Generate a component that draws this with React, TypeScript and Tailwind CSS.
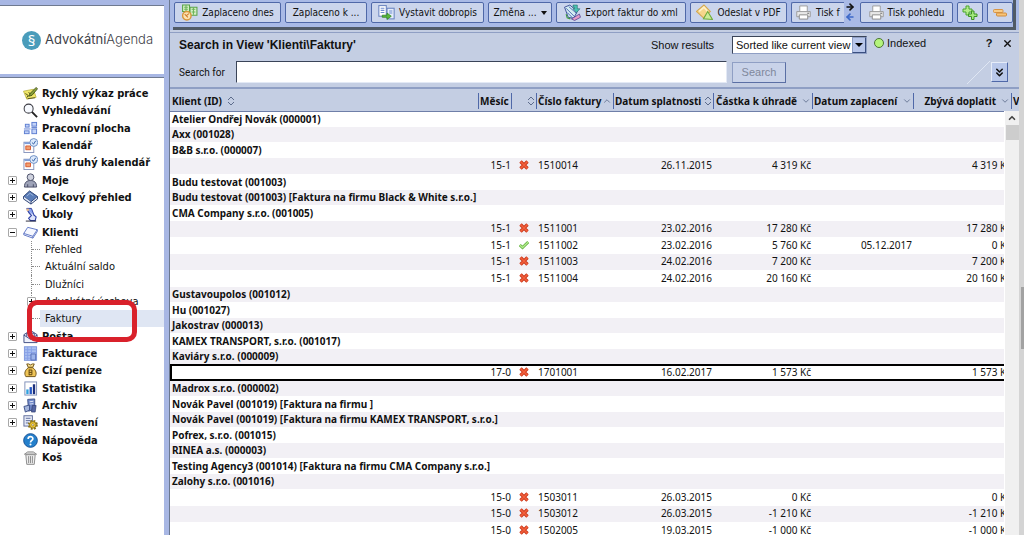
import React, { useState } from 'react';
import { ChevronDown, ChevronUp, ChevronsDown, ArrowLeft, ArrowRight, X } from 'lucide-react';
import clsx from 'clsx';

type IconProps = { className?: string };

const Svg: React.FC<{ className?: string; children: React.ReactNode }> = ({ className, children }) => (
    <svg viewBox="0 0 16 16" className={clsx('shrink-0', className)} fill="none" aria-hidden="true">
        {children}
    </svg>
);

const NoteIcon = (p: IconProps) => (
    <Svg {...p}>
        <path d="M0.500 5.500L11 3.500L14 12L4 14Z" fill="#f1e86a" stroke="#b8af3c" strokeWidth="0.800" />
        <path d="M2.500 8L5.500 10L4 12.500M6 6.500L7.500 8.500" stroke="#54521c" />
        <path d="M6 11L8 7.500L14 1.500L15.500 3L9.500 10Z" fill="#8aa03a" stroke="#30400c" strokeWidth="0.800" />
        <path d="M5 13.500L13 12.500" stroke="#54521c" />
    </Svg>
);

const SearchIcon = (p: IconProps) => (
    <Svg {...p}>
        <circle cx="6" cy="6" r="4.800" fill="#f7faff" stroke="#3c3c44" strokeWidth="1.100" />
        <path d="M9.500 9.500L15 15" stroke="#222" strokeWidth="2" />
    </Svg>
);

const DesktopIcon = (p: IconProps) => (
    <Svg {...p}>
        <g fill="#c3d3f8" stroke="#5b7cd0">
            <rect x="2.500" y="3.500" width="4" height="3" />
            <rect x="1.500" y="10.500" width="5" height="3" />
            <rect x="9.500" y="1.500" width="5" height="4" />
            <rect x="9.500" y="8.500" width="5" height="5" />
        </g>
        <path d="M1 8.500H8M9 7H15" stroke="#5b7cd0" />
    </Svg>
);

const CalendarIcon = (p: IconProps) => (
    <Svg {...p}>
        <rect x="1" y="4.500" width="10.500" height="11" fill="#fff" stroke="#8794bc" />
        <path d="M1.500 5.500H9" stroke="#7f9ed8" strokeWidth="2" />
        <path d="M3 8.500H8V12.500H3Z" fill="#f0a070" stroke="#d9552c" />
        <circle cx="11.500" cy="4.800" r="4.200" fill="#dce9fb" stroke="#6d8fc4" />
        <path d="M9.500 4.800L11.300 6.500L13.500 3" stroke="#2c5aa0" />
    </Svg>
);

const PersonIcon = (p: IconProps) => (
    <Svg {...p}>
        <path d="M1.500 15C1.500 10 4 8 8 8S14.500 10 14.500 15Z" fill="#9ea3b8" stroke="#4a4e66" />
        <circle cx="8" cy="4.500" r="3.600" fill="#cfd2de" stroke="#4a4e66" />
        <path d="M5 15V12M11 15V12" stroke="#4a4e66" />
    </Svg>
);

const BookIcon = (p: IconProps) => (
    <Svg {...p}>
        <path d="M0.500 7L7 1L15.500 7L8.500 12.500Z" fill="#5b7db8" stroke="#283d70" />
        <path d="M0.500 7V9.500L8.500 15V12.500M8.500 15L15.500 9.500V7" fill="#dfe6f4" stroke="#283d70" />
        <path d="M4 6.500L7.500 3.500L11 6" stroke="#9db5dc" />
    </Svg>
);

const TaskIcon = (p: IconProps) => (
    <Svg {...p}>
        <path d="M4 1.500H9L11.500 8L7 7.500Z" fill="#8aa2ee" stroke="#2c3fa0" />
        <path d="M5 4L9 9L6 12L8 14.500H13L14 10.500L11 8" fill="#dfe5fb" stroke="#3144a8" strokeWidth="1.200" />
        <circle cx="5" cy="3" r="1.500" fill="#e5b98c" />
        <path d="M3 15H14" stroke="#223" />
    </Svg>
);

const ClientsIcon = (p: IconProps) => (
    <Svg {...p}>
        <path d="M0.800 9L5 2.500L15.200 5L10.500 12Z" fill="#f6f8ff" stroke="#5d74c4" />
        <path d="M0.800 9V10.500L10.500 14L15.200 7V5M10.500 12V14" stroke="#5d74c4" />
    </Svg>
);

const MailIcon = (p: IconProps) => (
    <Svg {...p}>
        <path d="M1 6L8 1.500L15 6V14.500H1Z" fill="#eef1fb" stroke="#3c4a80" />
        <path d="M1 6.500L8 11L15 6.500M4 8V4.500H12V8" stroke="#3c4a80" />
    </Svg>
);

const LedgerIcon = (p: IconProps) => (
    <Svg {...p}>
        <rect x="1.500" y="0.800" width="13" height="14.500" fill="#a9bff0" stroke="#7d96dc" />
        <path d="M1.500 4H14.500M1.500 7H14.500M1.500 10H9M1.500 13H9M5 1V15M9 1V15" stroke="#86a0e6" />
        <path d="M8.500 8.500H13.500V15H8.500Z" fill="#9db4ea" stroke="#5870b8" />
    </Svg>
);

const MoneyIcon = (p: IconProps) => (
    <Svg {...p}>
        <path d="M5.500 5C2 8 1 11 3 14.500H13C15 11 14 8 10.500 5Z" fill="#efc558" stroke="#6e5216" />
        <path d="M5.500 4.500H10.500L12 1H10L8 2L6 1H4Z" fill="#f6dc8c" stroke="#6e5216" />
        <path d="M6.500 7V13M6.500 7.500H9.500V10H6.500M9.500 10V12.500H6.500" stroke="#5a400c" />
    </Svg>
);

const ChartIcon = (p: IconProps) => (
    <Svg {...p}>
        <rect x="2" y="1" width="12.500" height="14" fill="#fff" stroke="#7c8db8" />
        <rect x="3.500" y="9" width="2.500" height="5" fill="#2fa1de" />
        <rect x="7" y="6.500" width="2.500" height="7.500" fill="#2456c4" />
        <rect x="10.500" y="3.500" width="2.500" height="10.500" fill="#1b2f7c" />
    </Svg>
);

const ArchiveIcon = (p: IconProps) => (
    <Svg {...p}>
        <path d="M5 1.500L12.500 1V12L6 14Z" fill="#7088c8" stroke="#3c4f88" />
        <path d="M7 4L11 3.500M7 6.500L11 6" stroke="#e3e9f8" />
        <path d="M1 9L7 7.500V13L2.500 15Z" fill="#a4b5dc" stroke="#3c4f88" />
        <path d="M10 8H14L13 15H9Z" fill="#5566a4" stroke="#2c3a6c" strokeWidth="0.700" />
    </Svg>
);

const SettingsIcon = (p: IconProps) => (
    <Svg {...p}>
        <rect x="1" y="0.800" width="9" height="11" fill="#e8ecf8" stroke="#5a6898" />
        <path d="M3 3.500H8M3 6H8M3 8.500H6" stroke="#5a6898" />
        <circle cx="10.500" cy="10.500" r="4.300" stroke="#8a7214" strokeWidth="2" strokeDasharray="2 1.400" />
        <circle cx="10.500" cy="10.500" r="3.500" fill="#f0c834" stroke="#8a7214" />
        <circle cx="10.500" cy="10.500" r="1.200" fill="#fff" stroke="#6e5a10" strokeWidth="0.600" />
    </Svg>
);

const HelpIcon = (p: IconProps) => (
    <Svg {...p}>
        <circle cx="8" cy="8" r="7.300" fill="#2480cc" stroke="#134f94" />
        <path d="M5.500 6.300C5.500 3 10.500 3.200 10.500 6C10.500 7.800 8 7.800 8 10" stroke="#fff" strokeWidth="1.800" />
        <circle cx="8" cy="12.300" r="1.100" fill="#fff" />
    </Svg>
);

const TrashIcon = (p: IconProps) => (
    <Svg {...p}>
        <path d="M3 5H13L12 15.300H4Z" fill="#eee" stroke="#8a8a8a" />
        <path d="M1.500 4.500L5 2H11L14.500 4.500Z" fill="#dcdcdc" stroke="#8a8a8a" />
        <path d="M6 6.500V14M8 6.500V14M10 6.500V14" stroke="#8a8a8a" />
    </Svg>
);

const PaidIcon = (p: IconProps) => (
    <Svg {...p}>
        <path d="M1.500 1H8V7H1.500ZM8.500 3H15V10.500H8.500Z" fill="#d9f0c8" stroke="#5aa348" />
        <path d="M3 3H6.500M3 5H6.500M10 5H13.500M10 7.500H13.500M4.700 1V7M11.700 3V10" stroke="#6cb45a" />
        <circle cx="5.500" cy="11" r="4" fill="#fbe3b4" stroke="#d8963c" strokeWidth="1.300" />
        <path d="M3.500 9.500L6.500 12.500M7.500 9L5 11" stroke="#d07c2c" />
    </Svg>
);

const CreditNoteIcon = (p: IconProps) => (
    <Svg {...p}>
        <rect x="0.800" y="1.500" width="7" height="10" fill="#fff" stroke="#6a84c0" />
        <rect x="8.500" y="4" width="6.700" height="10" fill="#e5ecfa" stroke="#6a84c0" />
        <path d="M2.500 4H6M2.500 6H6M2.500 8H6M10.500 6.500H13.500M10.500 8.500H13.500" stroke="#6f8cd0" />
        <path d="M4 10.500H8.500V8.500L12.500 11.500L8.500 14.500V12.500H4Z" fill="#58b83c" stroke="#2f8420" strokeWidth="0.700" />
    </Svg>
);

const ExportIcon = (p: IconProps) => (
    <Svg {...p}>
        <path d="M0.500 3L5.500 1L12.500 7L9 13.500L4 12.500Z" fill="#d4ecf2" stroke="#2c3c8c" strokeWidth="0.800" />
        <path d="M2 4L10 12M4.500 2.500L12 9M3 8L8 13" stroke="#3c5cac" strokeWidth="0.800" />
        <path d="M8.500 1H12.500V4.500H15L11.800 8L8.500 4.500H10V3H8.500Z" fill="#4cc4b4" stroke="#246c6c" strokeWidth="0.600" />
        <path d="M7 14L14.500 9.500L15.500 12.500L10 15.500Z" fill="#e49cc8" stroke="#4c3c8c" strokeWidth="0.700" />
        <path d="M2 9.500L3 13L6 14" stroke="#3c9c3c" />
    </Svg>
);

const SendIcon = (p: IconProps) => (
    <Svg {...p}>
        <path d="M0.500 7L7.500 1L13.500 7L7 13Z" fill="#f6d68c" stroke="#d4a850" />
        <path d="M3 7L7.500 3L11 7" stroke="#fff1c8" strokeWidth="1.500" />
        <path d="M11 7L15.500 14.500L7 14Z" fill="#cdeb9a" stroke="#6fac3c" />
    </Svg>
);

const PrinterIcon = (p: IconProps) => (
    <Svg {...p}>
        <path d="M4 7V1H12V7" fill="#fff" stroke="#9a9a9a" />
        <path d="M0.800 7H15.200V12.500H0.800Z" fill="#e8e8e8" stroke="#9a9a9a" />
        <path d="M3.500 10.500H12.500V15H3.500Z" fill="#fff" stroke="#8a8a8a" />
        <path d="M12 8.800H14" stroke="#666" />
    </Svg>
);

const PlusIcon = (p: IconProps) => (
    <Svg {...p}>
        <path d="M4 1H7V4H10V7H7V10H4V7H1V4H4Z" fill="#b4ec8c" stroke="#48a42c" />
        <path d="M9.500 6H12V9H15V11.500H12V14.500H9.500V11.500H6.500V9H9.500Z" fill="#a4e880" stroke="#3c9424" />
    </Svg>
);

const MinusIcon = (p: IconProps) => (
    <Svg {...p}>
        <rect x="1.500" y="4.500" width="9.500" height="3" rx="1" fill="#f8cc88" stroke="#d89444" />
        <rect x="4.500" y="8" width="10" height="3" rx="1" fill="#f8c478" stroke="#d08c3c" />
    </Svg>
);

const UnpaidMark = () => (
    <svg viewBox="0 0 10 10" className="mx-auto h-[10px] w-[10px]" fill="none" role="img" aria-label="Nezaplaceno">
        <path d="M1.500 1.500L8.500 8.500M8.500 1.500L1.500 8.500" stroke="#c8381c" strokeWidth="3.400" />
        <path d="M1.500 1.500L8.500 8.500M8.500 1.500L1.500 8.500" stroke="#f4603c" strokeWidth="1.600" />
    </svg>
);

const PaidMark = () => (
    <svg viewBox="0 0 10 10" className="mx-auto h-[10px] w-[10px]" fill="none" role="img" aria-label="Zaplaceno">
        <path d="M0.800 5L3.500 7.500L9.200 2" stroke="#5cac3c" strokeWidth="2.800" />
        <path d="M0.800 5L3.500 7.500L9.200 2" stroke="#b4ec8c" strokeWidth="1.300" />
    </svg>
);

const SortBoth = () => (
    <svg viewBox="0 0 8 10" className="h-[10px] w-[8px] shrink-0" fill="none" aria-hidden="true">
        <path d="M1 4L4 1L7 4M1 6L4 9L7 6" stroke="#5d6c8c" />
    </svg>
);

type NavItem = {
    label: string;
    icon?: React.FC<IconProps>;
    toggle?: '+' | '-';
    child?: boolean;
    active?: boolean;
};

const navItems: NavItem[] = [
    { label: 'Rychlý výkaz práce', icon: NoteIcon },
    { label: 'Vyhledávání', icon: SearchIcon },
    { label: 'Pracovní plocha', icon: DesktopIcon },
    { label: 'Kalendář', icon: CalendarIcon },
    { label: 'Váš druhý kalendář', icon: CalendarIcon },
    { label: 'Moje', icon: PersonIcon, toggle: '+' },
    { label: 'Celkový přehled', icon: BookIcon, toggle: '+' },
    { label: 'Úkoly', icon: TaskIcon, toggle: '+' },
    { label: 'Klienti', icon: ClientsIcon, toggle: '-' },
    { label: 'Přehled', child: true },
    { label: 'Aktuální saldo', child: true },
    { label: 'Dlužníci', child: true },
    { label: 'Advokátní úschova', child: true, toggle: '+' },
    { label: 'Faktury', child: true, active: true },
    { label: 'Pošta', icon: MailIcon, toggle: '+' },
    { label: 'Fakturace', icon: LedgerIcon, toggle: '+' },
    { label: 'Cizí peníze', icon: MoneyIcon, toggle: '+' },
    { label: 'Statistika', icon: ChartIcon, toggle: '+' },
    { label: 'Archiv', icon: ArchiveIcon, toggle: '+' },
    { label: 'Nastavení', icon: SettingsIcon, toggle: '+' },
    { label: 'Nápověda', icon: HelpIcon },
    { label: 'Koš', icon: TrashIcon },
];

const Toggle: React.FC<{ open: boolean; label: string }> = ({ open, label }) => (
    <button aria-label={label} className="flex h-[9px] w-[9px] shrink-0 items-center justify-center rounded-[1px] border border-[#a8a8a8] bg-white">
        <svg viewBox="0 0 5 5" className="h-[5px] w-[5px]" aria-hidden="true">
            <path d={open ? 'M0 2.5H5' : 'M0 2.5H5M2.5 0V5'} stroke="#111" />
        </svg>
    </button>
);

const NavRow: React.FC<{ item: NavItem }> = ({ item }) => {
    const Icon = item.icon;

    if (item.child) {
        return (
            <li className="flex h-[17px] items-stretch pl-[31px] nth-[3n]:h-[18px]">
                <span className={clsx('w-[1px] border-l border-dotted border-[#8a8a8a]', item.active && 'h-[9px]')} />
                <span className="flex w-[8px] items-center">
                    {item.toggle ? (
                        <span className="-ml-[5px]"><Toggle open={false} label={item.label} /></span>
                    ) : (
                        <span className="w-full border-t border-dotted border-[#8a8a8a]" />
                    )}
                </span>
                <a href="#" className={clsx('flex flex-1 items-center pl-[5px] text-[11px] leading-none', item.active && 'bg-[#dfe6f3]')}>
                    {item.label}
                </a>
            </li>
        );
    }

    return (
        <li className="flex h-[17px] items-center pl-[8px] nth-[3n]:h-[18px]">
            <span className="w-[15px]">
                {item.toggle && <Toggle open={item.toggle === '-'} label={item.label} />}
            </span>
            <a href="#" className="flex items-center gap-[4px] text-[11px] leading-none font-bold whitespace-nowrap">
                {Icon && <Icon className="h-[15px] w-[15px]" />}
                {item.label}
            </a>
        </li>
    );
};

const Sidebar = () => (
    <aside className="flex w-[170px] shrink-0 flex-col border-r border-[#6b7890] bg-[#a8b7e4] pr-[5px]">
        <div className="mt-[5px] flex h-[69px] items-center gap-[4px] border-t border-[#6f7a90] bg-white pl-[22px]">
            <span className="flex h-[19px] w-[19px] items-center justify-center rounded-full bg-[#4a9cba] text-[15px] leading-none text-white">§</span>
            <span className="font-[Inter,sans-serif] text-[13px] whitespace-nowrap text-[#3f4248]">
                Advokátní<span className="font-light">Agenda</span>
            </span>
        </div>
        <nav className="mt-[3px] flex-1 border-t border-[#6f7a90] bg-white pt-[7px] font-['DejaVu_Sans_Condensed',sans-serif]">
            <ul className="relative">
                {navItems.map((item) => <NavRow key={item.label} item={item} />)}
                {/* hand-drawn highlight over the active entry */}
                <li aria-hidden="true" className="pointer-events-none absolute top-[215px] left-[27px] h-[42px] w-[110px] rounded-[10px] border-[5px] border-[#d9212b]" />
            </ul>
        </nav>
    </aside>
);

const actionClass = 'flex h-[21px] shrink-0 items-center justify-center gap-[4px] rounded-[2px] border border-[#4f68a8] bg-[#cbd5ec] leading-none whitespace-nowrap';

const Toolbar = () => (
    <div className="shrink-0 bg-[#a9bae6] pr-[3px] pl-[3px]">
        <div className="flex h-[30px] items-start gap-[4px] border-r-[3px] border-b-[3px] border-[#505a66] pt-[2px] pl-[1px] font-['DejaVu_Sans_Condensed',sans-serif] text-[10px]">
            <button className={clsx(actionClass, 'w-[107px]')}><PaidIcon className="h-[17px] w-[17px]" />Zaplaceno dnes</button>
            <button className={clsx(actionClass, 'w-[82px]')}>Zaplaceno k ...</button>
            <button className={clsx(actionClass, 'w-[113px]')}><CreditNoteIcon className="h-[17px] w-[17px]" />Vystavit dobropis</button>
            <button className={clsx(actionClass, 'w-[64px]')}>
                Změna ...
                <svg viewBox="0 0 6 4" className="h-[4px] w-[6px]" aria-hidden="true"><path d="M0 0H6L3 4Z" fill="#111" /></svg>
            </button>
            <button className={clsx(actionClass, 'w-[130px]')}><ExportIcon className="h-[17px] w-[17px]" />Export faktur do xml</button>
            <button className={clsx(actionClass, 'w-[97px]')}><SendIcon className="h-[17px] w-[17px]" />Odeslat v PDF</button>
            <div className="flex w-[65px] shrink-0">
                <button className="flex h-[21px] w-[53px] items-center gap-[5px] rounded-l-[2px] border border-r-0 border-[#4f68a8] bg-[#cbd5ec] pl-[4px] leading-none whitespace-nowrap">
                    <PrinterIcon className="h-[15px] w-[15px]" />Tisk f
                </button>
                <div className="flex flex-1 flex-col items-center">
                    <button aria-label="Další akce"><ArrowRight className="h-[10px] w-[10px] text-[#111]" strokeWidth={4} /></button>
                    <button aria-label="Předchozí akce"><ArrowLeft className="h-[10px] w-[10px] text-[#3c68c8]" strokeWidth={4} /></button>
                </div>
            </div>
            <button className={clsx(actionClass, 'w-[93px]')}><PrinterIcon className="h-[15px] w-[15px]" />Tisk pohledu</button>
            <button aria-label="Rozbalit vše" className={clsx(actionClass, 'w-[26px]')}><PlusIcon className="h-[16px] w-[16px]" /></button>
            <button aria-label="Sbalit vše" className={clsx(actionClass, 'w-[26px]')}><MinusIcon className="h-[16px] w-[16px]" /></button>
        </div>
    </div>
);

const SearchPanel = () => {
    const [query, setQuery] = useState('');

    return (
        <section className="mt-[2px] flex h-[57px] shrink-0 flex-col border-t border-b-2 border-[#8f9fc4] bg-[#c4cee3] pl-[9px] font-['Liberation_Sans',sans-serif] text-[11px]">
            <div className="flex h-[24px] items-center pr-[6px]">
                <h1 className="flex-1 text-[12px] leading-none font-bold">Search in View 'Klienti\Faktury'</h1>
                <label htmlFor="sort" className="w-[81px]">Show results</label>
                <div className="relative mr-[7px] flex h-[18px] w-[135px]">
                    <select id="sort" className="w-full appearance-none border border-t-[#3a4458] border-r-[#8f9fc4] border-b-[#8f9fc4] border-l-[#3a4458] bg-white pl-[3px]">
                        <option>Sorted like current view</option>
                    </select>
                    <span className="pointer-events-none absolute top-[1px] right-[1px] bottom-[1px] flex w-[14px] items-center justify-center border border-[#8f9fc4] border-r-[#3a4f80] border-b-[#3a4f80] bg-[#b7c6ea]">
                        <svg viewBox="0 0 8 4" className="h-[4px] w-[8px]" aria-hidden="true"><path d="M0 0H8L4 4Z" fill="#000" /></svg>
                    </span>
                </div>
                <span className="flex w-[110px] items-center gap-[3px] pb-[4px]">
                    <i className="h-[10px] w-[10px] rounded-full border border-[#4c7434] bg-[#b4f47c]" />
                    Indexed
                </span>
                <button className="w-[10px] pb-[4px] font-bold" aria-label="Help">?</button>
                <button className="ml-[8px] pb-[4px]" aria-label="Close"><X className="h-[11px] w-[11px]" strokeWidth={3} /></button>
            </div>
            <div className="flex h-[30px] items-center pr-[11px]">
                <label htmlFor="query" className="w-[57px] font-[Roboto,sans-serif] text-[10px]">Search for</label>
                <input
                    id="query"
                    value={query}
                    onChange={(e) => setQuery(e.target.value)}
                    className="h-[22px] min-w-0 flex-1 border border-t-[#3a4458] border-r-[#e3e9f5] border-b-[#e3e9f5] border-l-[#3a4458] bg-white px-1 outline-none"
                />
                <button className="mr-[181px] ml-[5px] h-[21px] w-[54px] border border-[#8f9fc4] border-r-[#5a6fa4] border-b-[#5a6fa4] bg-[#c9d3e9] text-[#7f889c]">Search</button>
                <svg viewBox="0 0 24 24" className="h-[24px] w-[24px]" aria-hidden="true"><path d="M0 24L23 1" stroke="#dfe6f3" /></svg>
                <button aria-label="More options" className="flex h-[20px] w-[17px] items-center justify-center border border-[#e6ecf8] border-r-[#4f68a8] border-b-[#4f68a8] bg-[#b9c8ea]">
                    <ChevronsDown className="h-[13px] w-[13px]" strokeWidth={3} />
                </button>
            </div>
        </section>
    );
};

type Invoice = {
    month: string;
    paid?: boolean;
    number: string;
    due: string;
    amount: string;
    paidOn?: string;
    rest: string;
    selected?: boolean;
};

const rows: (string | Invoice)[] = [
    'Atelier Ondřej Novák (000001)',
    'Axx (001028)',
    'B&B s.r.o. (000007)',
    { month: '15-1', number: '1510014', due: '26.11.2015', amount: '4 319 Kč', rest: '4 319 Kč' },
    'Budu testovat (001003)',
    'Budu testovat (001003) [Faktura na firmu Black & White s.r.o.]',
    'CMA Company s.r.o. (001005)',
    { month: '15-1', number: '1511001', due: '23.02.2016', amount: '17 280 Kč', rest: '17 280 Kč' },
    { month: '15-1', paid: true, number: '1511002', due: '23.02.2016', amount: '5 760 Kč', paidOn: '05.12.2017', rest: '0 Kč' },
    { month: '15-1', number: '1511003', due: '24.02.2016', amount: '7 200 Kč', rest: '7 200 Kč' },
    { month: '15-1', number: '1511004', due: '24.02.2016', amount: '20 160 Kč', rest: '20 160 Kč' },
    'Gustavoupolos (001012)',
    'Hu (001027)',
    'Jakostrav (000013)',
    'KAMEX TRANSPORT, s.r.o. (001017)',
    'Kaviáry s.r.o. (000009)',
    { month: '17-0', number: '1701001', due: '16.02.2017', amount: '1 573 Kč', rest: '1 573 Kč', selected: true },
    'Madrox s.r.o. (000002)',
    'Novák Pavel (001019) [Faktura na firmu ]',
    'Novák Pavel (001019) [Faktura na firmu KAMEX TRANSPORT, s.r.o.]',
    'Pofrex, s.r.o. (001015)',
    'RINEA a.s. (000003)',
    'Testing Agency3 (001014) [Faktura na firmu CMA Company s.r.o.]',
    'Zalohy s.r.o. (001016)',
    { month: '15-0', number: '1503011', due: '26.03.2015', amount: '0 Kč', rest: '0 Kč' },
    { month: '15-0', number: '1503012', due: '26.03.2015', amount: '-1 210 Kč', rest: '-1 210 Kč' },
    { month: '15-0', number: '1502005', due: '19.03.2015', amount: '-1 000 Kč', rest: '-1 000 Kč' },
];

const columns = [
    { label: 'Klient (ID)', sort: 'both', align: 'justify-start gap-[5px]' },
    { label: 'Měsíc', align: 'justify-start' },
    { label: '', sort: 'both', align: 'justify-end' },
    { label: 'Číslo faktury', sort: 'up', align: 'justify-between' },
    { label: 'Datum splatnosti', sort: 'both', align: 'justify-between' },
    { label: 'Částka k úhradě', sort: 'down', align: 'justify-end gap-[4px]' },
    { label: 'Datum zaplacení', sort: 'down', align: 'justify-between' },
    { label: 'Zbývá doplatit', sort: 'down', align: 'justify-end gap-[4px]' },
    { label: 'V', align: 'justify-start' },
];

const InvoiceTable = () => (
    <div className="relative flex-1 overflow-hidden bg-white">
        <table className="w-full table-fixed border-collapse text-[10px] leading-none whitespace-nowrap">
            <colgroup>
                <col />
                <col className="w-[33px]" />
                <col className="w-[25px]" />
                <col className="w-[77px]" />
                <col className="w-[100px]" />
                <col className="w-[99px]" />
                <col className="w-[101px]" />
                <col className="w-[98px]" />
                <col className="w-[8px]" />
            </colgroup>
            <thead>
                <tr className="h-[22px] border-b border-[#6f7fa8] bg-[#c4cee3]">
                    {columns.map((col, i) => (
                        <th key={i} className="p-0 pt-[2px]">
                            <div className={clsx('flex h-[16px] items-center', col.align, i > 0 ? 'border-l border-[#4f68a8] px-[1px]' : 'px-[2px]')}>
                                {col.label}
                                {col.sort === 'both' && <SortBoth />}
                                {col.sort === 'up' && <ChevronUp className="h-[10px] w-[10px] shrink-0 text-[#5d6c8c]" />}
                                {col.sort === 'down' && <ChevronDown className="h-[10px] w-[10px] shrink-0 text-[#5d6c8c]" />}
                            </div>
                        </th>
                    ))}
                </tr>
            </thead>
            <tbody>
                {rows.map((row, i) => typeof row === 'string' ? (
                    <tr key={i} className="h-[16px] even:h-[15px] even:bg-[#f2f0f5]">
                        <td colSpan={9} className="p-0 pb-[1px] pl-[2px] font-bold">{row}</td>
                    </tr>
                ) : (
                    <tr key={i} className={clsx('h-[17px] even:h-[16px] even:bg-[#f2f0f5]', row.selected && 'outline-2 -outline-offset-2 outline-black')}>
                        <td className="p-0" />
                        <td className="p-0 pb-[2px] text-right">{row.month}</td>
                        <td className="p-0 pb-[2px]">{row.paid ? <PaidMark /> : <UnpaidMark />}</td>
                        <td className="p-0 pb-[2px] pl-[2px]">{row.number}</td>
                        <td className="p-0 pr-[1px] pb-[2px] text-right">{row.due}</td>
                        <td className="p-0 pr-[1px] pb-[2px] text-right">{row.amount}</td>
                        <td className="p-0 pr-[1px] pb-[2px] text-right">{row.paidOn}</td>
                        <td className="p-0 pb-[2px] text-right">{row.rest}</td>
                        <td className="p-0" />
                    </tr>
                ))}
            </tbody>
        </table>
        {/* list scrollbar */}
        <div className="absolute top-[22px] right-0 bottom-0 flex w-[15px] flex-col items-center border-l border-white bg-[#f0f0f0]">
            <ChevronUp className="my-[2px] h-[10px] w-[10px] text-[#444]" strokeWidth={4} />
            <div className="h-[15px] w-[13px] bg-[#cdcdcd]" />
        </div>
    </div>
);

export default function App() {
    return (
        <div className="flex h-screen overflow-hidden bg-[#a8b7e4] font-['Noto_Sans',sans-serif] text-[#111]">
            <Sidebar />
            <main className="flex min-w-0 flex-1 flex-col bg-[#c4cee3]">
                <Toolbar />
                <SearchPanel />
                <InvoiceTable />
            </main>
            {/* window scrollbar */}
            <div className="flex w-[5px] shrink-0 flex-col bg-[#d4d4d4] pt-[287px]">
                <div className="ml-[2px] h-[62px] bg-[#a2a2a2]" />
            </div>
        </div>
    );
}
